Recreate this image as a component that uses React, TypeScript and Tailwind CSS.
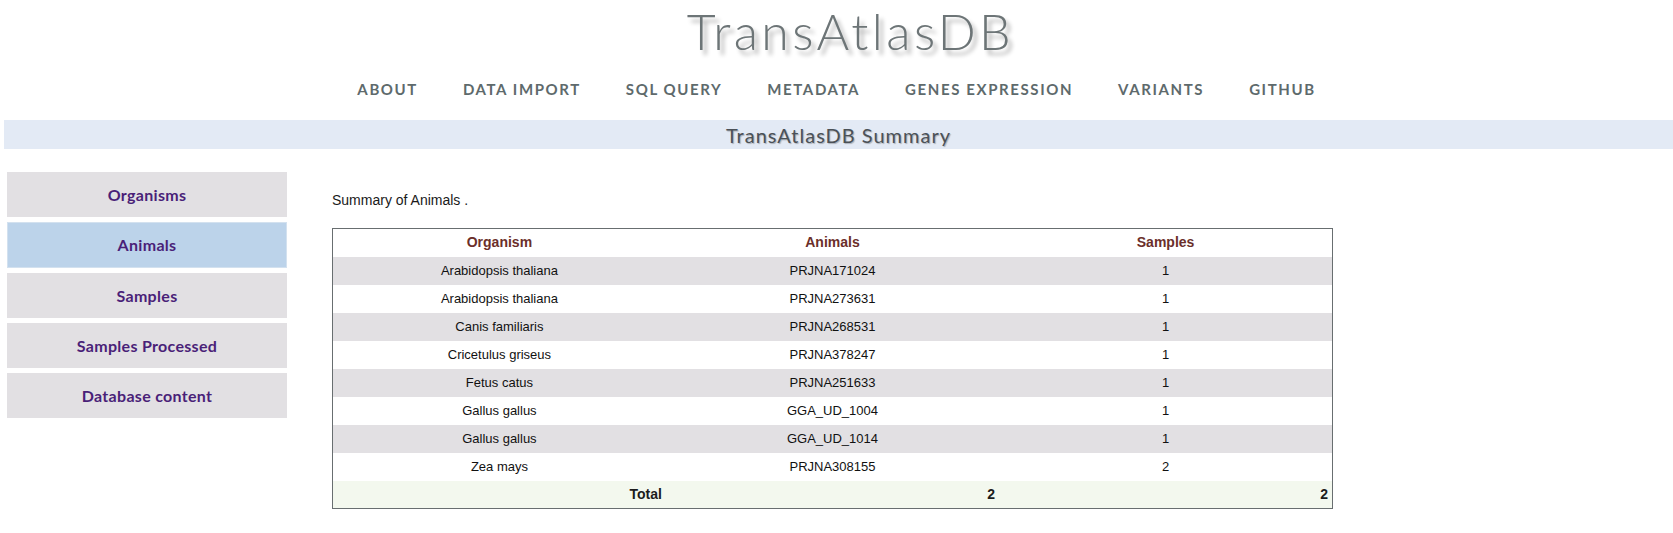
import React from "react";

const navItems = [
  "About",
  "Data Import",
  "SQL Query",
  "Metadata",
  "Genes Expression",
  "Variants",
  "GitHub",
];

const sideItems = [
  "Organisms",
  "Animals",
  "Samples",
  "Samples Processed",
  "Database content",
];

const rows = [
  ["Arabidopsis thaliana", "PRJNA171024", "1"],
  ["Arabidopsis thaliana", "PRJNA273631", "1"],
  ["Canis familiaris", "PRJNA268531", "1"],
  ["Cricetulus griseus", "PRJNA378247", "1"],
  ["Fetus catus", "PRJNA251633", "1"],
  ["Gallus gallus", "GGA_UD_1004", "1"],
  ["Gallus gallus", "GGA_UD_1014", "1"],
  ["Zea mays", "PRJNA308155", "2"],
];

const App: React.FC = () => {
  return (
    <div className="w-[1673px] h-[533px] bg-white overflow-hidden font-['Lato',sans-serif]">
      {/* 标题 */}
      <div className="h-[66px] flex justify-center items-start pt-[1px] pl-[28px]">
        <h1
          className="text-[50px] leading-[60px] font-light text-[#6d7577] tracking-[3.4px]"
          style={{ textShadow: "4px 5px 4px rgba(0,0,0,0.3)" }}
        >
          TransAtlasDB
        </h1>
      </div>

      {/* 导航 */}
      <nav className="h-[38px] mt-[4px] flex justify-center items-center gap-[45px]">
        {navItems.map((item) => (
          <a
            key={item}
            className="text-[15px] font-bold uppercase tracking-[1.6px] text-[#5e6a6c]"
          >
            {item}
          </a>
        ))}
      </nav>

      {/* 摘要标题条 */}
      <div className="mt-[12px] ml-[4px] h-[29px] bg-[#e3eaf5] flex items-center justify-center">
        <h2
          className="text-[20px] text-[#4b5157] tracking-[1px]"
          style={{ textShadow: "1px 1px 1px rgba(0,0,0,0.25)" }}
        >
          TransAtlasDB Summary
        </h2>
      </div>

      {/* 主体 */}
      <div className="flex mt-[23px]">
        <div className="ml-[7px] w-[280px] flex flex-col gap-[5px]">
          {sideItems.map((item) => (
            <div
              key={item}
              className={
                item === "Animals"
                  ? "h-[46px] flex items-center justify-center bg-[#bcd3ea] border border-[#d3e1ef] text-[16px] tracking-[0.3px] font-bold text-[#4a1f78]"
                  : "h-[45px] flex items-center justify-center bg-[#e2e0e3] text-[16px] tracking-[0.3px] font-bold text-[#4a1f78]"
              }
            >
              {item}
            </div>
          ))}
        </div>

        <div className="ml-[45px] w-[1000px] font-['Liberation_Sans',Arial,sans-serif]">
          <p className="text-[14px] text-[#1a1a1a] mt-[19px] leading-[18px]">
            Summary of Animals .
          </p>
          <table className="mt-[19px] w-[1001px] border border-[#686e70] border-collapse table-fixed text-[13px] text-[#111]">
            <thead>
              <tr className="h-[28px]">
                <th className="w-1/3 text-[14px] font-bold text-[#6b2f2a]">Organism</th>
                <th className="w-1/3 text-[14px] font-bold text-[#6b2f2a]">Animals</th>
                <th className="w-1/3 text-[14px] font-bold text-[#6b2f2a]">Samples</th>
              </tr>
            </thead>
            <tbody>
              {rows.map((r, i) => (
                <tr
                  key={i}
                  className={i % 2 === 0 ? "h-[28px] bg-[#e2e0e3]" : "h-[28px] bg-white"}
                >
                  <td className="text-center">{r[0]}</td>
                  <td className="text-center">{r[1]}</td>
                  <td className="text-center">{r[2]}</td>
                </tr>
              ))}
              <tr className="h-[28px] bg-[#f3f8ee] font-bold text-[14px] text-[#1c1c1c]">
                <td className="text-right pr-[4px]">Total</td>
                <td className="text-right pr-[4px]">2</td>
                <td className="text-right pr-[4px]">2</td>
              </tr>
            </tbody>
          </table>
        </div>
      </div>
    </div>
  );
};

export default App;
